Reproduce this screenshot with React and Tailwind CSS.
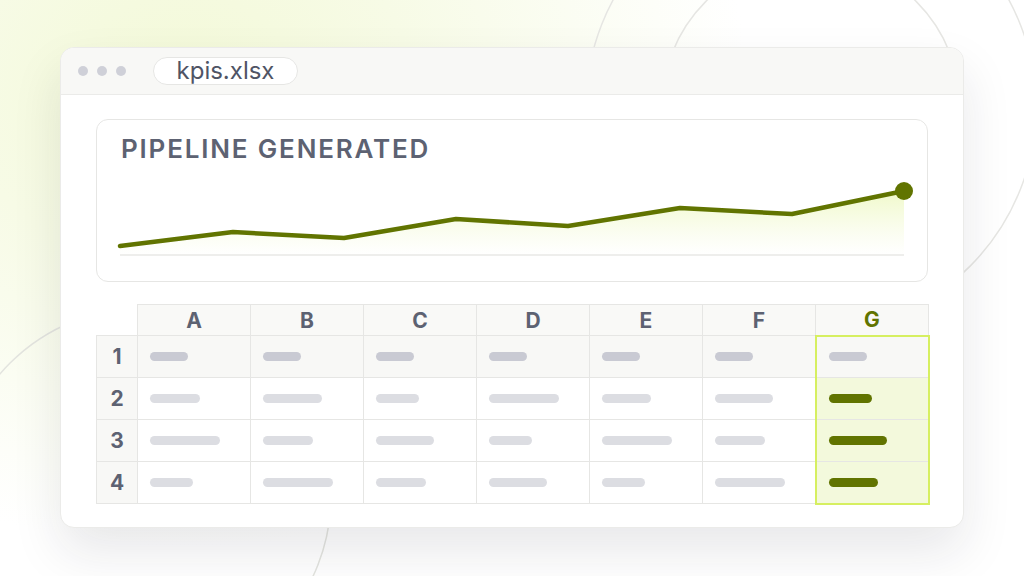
import React from 'react';

const COLS = ['A', 'B', 'C', 'D', 'E', 'F', 'G'];

// bar widths per row, columns A..G
const ROWS = [
  [38, 38, 38, 38, 38, 38, 38],
  [50, 59, 43, 70, 49, 58, 43],
  [70, 50, 58, 43, 70, 50, 58],
  [43, 70, 50, 58, 43, 70, 49],
];

const POINTS = [
  [23, 84], [136, 70], [247, 76], [359, 57], [471, 64], [583, 46], [695, 52], [807, 29],
];

function Backdrop() {
  return (
    <svg className="absolute inset-0" width="1024" height="576" viewBox="0 0 1024 576" fill="none">
      <circle cx="811" cy="107" r="149" stroke="#e6e6e3" strokeWidth="1.5" />
      <circle cx="811" cy="107" r="225" stroke="#e6e6e3" strokeWidth="1.5" />
      <circle cx="143" cy="496" r="188" stroke="#e3e4df" strokeWidth="1.5" />
    </svg>
  );
}

function Chart() {
  const line = POINTS.map((p) => p.join(',')).join(' ');
  const area = `23,93 ${line} 807,93`;
  return (
    <svg width="830" height="118" viewBox="0 0 830 118" className="block">
      <defs>
        <linearGradient id="fill" x1="0" y1="0" x2="0" y2="1">
          <stop offset="0" stopColor="#eef8c4" stopOpacity="0.9" />
          <stop offset="1" stopColor="#ffffff" stopOpacity="0.6" />
        </linearGradient>
      </defs>
      <polygon points={area} fill="url(#fill)" />
      <line x1="23" y1="93" x2="807" y2="93" stroke="#e8e8e6" strokeWidth="1.5" />
      <polyline points={line} fill="none" stroke="#617400" strokeWidth="4.5" strokeLinejoin="round" strokeLinecap="round" />
      <circle cx="807" cy="29" r="9" fill="#617400" />
    </svg>
  );
}

function Sheet() {
  return (
    <table className="mt-[22px] table-fixed border-collapse w-[832px]">
      <colgroup>
        <col className="w-[41px]" />
        {COLS.map((c) => (
          <col key={c} className="w-[113px]" />
        ))}
      </colgroup>
      <thead>
        <tr className="h-[31px]">
          <th className="p-0" />
          {COLS.map((c) => (
            <th
              key={c}
              className={`p-0 border border-[#e6e6e4] bg-[#f9f9f7] text-[21px] leading-none font-bold ${
                c === 'G' ? 'text-[#617400] border-b-2 border-b-[#d6ef60]' : 'text-[#5d6272]'
              }`}
            >
              {c}
            </th>
          ))}
        </tr>
      </thead>
      <tbody>
        {ROWS.map((row, i) => (
          <tr key={i} className="h-[42px]">
            <td className="p-0 border border-[#e6e6e4] bg-[#f8f8f6] text-center text-[21px] font-bold text-[#5d6272]">
              {i + 1}
            </td>
            {row.map((w, j) => {
              const isG = j === 6;
              const first = i === 0;
              let cell = first ? 'bg-[#f8f8f6]' : 'bg-white';
              if (isG) {
                cell = `border-x-2 border-x-[#d6ef60] ${first ? 'bg-[#f8f8f6]' : 'bg-[#f3f9dc]'} ${
                  i === ROWS.length - 1 ? 'border-b-2 border-b-[#d6ef60]' : ''
                }`;
              }
              const bar = isG && !first ? 'bg-[#617400]' : first ? 'bg-[#c9cad3]' : 'bg-[#dcdde2]';
              return (
                <td key={j} className={`p-0 border border-[#e6e6e4] ${cell}`}>
                  <div className={`ml-[12px] h-[9px] rounded-full ${bar}`} style={{ width: w }} />
                </td>
              );
            })}
          </tr>
        ))}
      </tbody>
    </table>
  );
}

export default function App() {
  return (
    <div
      className="relative w-[1024px] h-[576px] overflow-hidden pt-[47px] pl-[60px] bg-[radial-gradient(ellipse_55%_80%_at_18%_15%,#f3f9d8_0%,#f7fbe6_40%,#ffffff_100%)]"
      style={{ fontFamily: 'Inter, "Liberation Sans", sans-serif' }}
    >
      <Backdrop />

      {/* Window */}
      <div className="relative w-[904px] h-[481px] rounded-[14px] border border-[#ebebe9] bg-white shadow-[0_24px_50px_rgba(30,34,50,0.10)] overflow-hidden">
        {/* Title bar */}
        <div className="h-[47px] flex items-center pl-[17px] bg-[#f8f8f6] border-b border-[#ebebe9]">
          <div className="flex items-center gap-[9px]">
            <span className="w-[10px] h-[10px] rounded-full bg-[#cfd0d8]" />
            <span className="w-[10px] h-[10px] rounded-full bg-[#cfd0d8]" />
            <span className="w-[10px] h-[10px] rounded-full bg-[#cfd0d8]" />
          </div>
          <div className="ml-[27px] w-[145px] h-[28px] rounded-full border border-[#e6e6e4] bg-white flex items-center justify-center text-[24px] leading-none text-[#4f5465]">
            kpis.xlsx
          </div>
        </div>

        {/* Body */}
        <div className="pl-[35px] pt-[24px]">
          <div className="w-[832px] h-[163px] rounded-[12px] border border-[#e6e6e4] flex flex-col">
            <div className="pl-[24px] pt-[16px] text-[26px] leading-[26px] font-semibold tracking-[0.07em] text-[#5d6272]">
              PIPELINE GENERATED
            </div>
            <Chart />
          </div>
          <Sheet />
        </div>
      </div>
    </div>
  );
}
